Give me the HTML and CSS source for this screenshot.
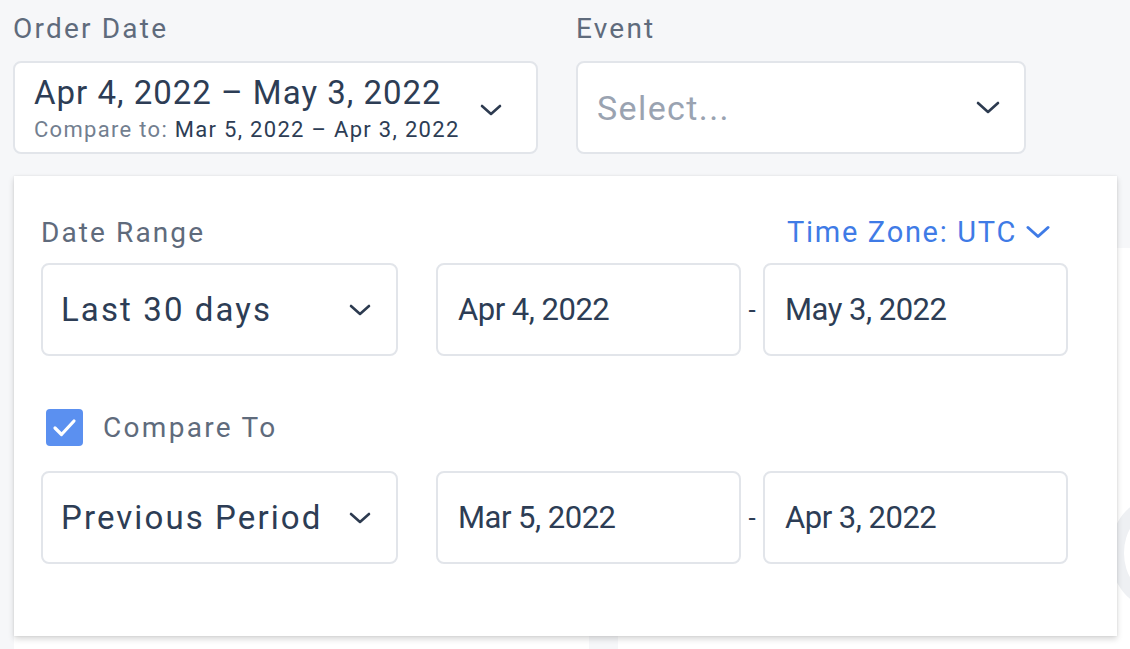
FILE: index.html
```html
<!DOCTYPE html>
<html>
<head>
<meta charset="utf-8">
<link rel="stylesheet" href="styles.css">
</head>
<body>
<div class="page">
  <div class="filters">
    <div class="field field-date">
      <div class="label">Order Date</div>
      <div class="box date-box">
        <div class="date-text">
          <div class="date-main">Apr 4, 2022 – May 3, 2022</div>
          <div class="date-sub"><span class="muted">Compare to:</span> Mar 5, 2022 – Apr 3, 2022</div>
        </div>
        <svg class="chev" width="22" height="12" viewBox="0 0 22 12"><path d="M2 2 L11 10 L20 2" fill="none" stroke="#2d3b50" stroke-width="2.6" stroke-linecap="round" stroke-linejoin="round"/></svg>
      </div>
    </div>
    <div class="field field-event">
      <div class="label">Event</div>
      <div class="box event-box">
        <span class="placeholder">Select...</span>
        <svg class="chev" width="24" height="13" viewBox="0 0 24 13"><path d="M2 2 L12 11 L22 2" fill="none" stroke="#2d3b50" stroke-width="2.6" stroke-linecap="round" stroke-linejoin="round"/></svg>
      </div>
    </div>
  </div>

  <div class="behind">
    <div class="card card-left"></div>
    <div class="card card-right"><div class="donut"></div></div>
  </div>

  <div class="panel">
    <div class="panel-head">
      <div class="section-label">Date Range</div>
      <div class="tz">Time Zone: UTC
        <svg width="24" height="14" viewBox="0 0 24 14"><path d="M2 2.5 L12 11.5 L22 2.5" fill="none" stroke="#3f7be6" stroke-width="3" stroke-linecap="round" stroke-linejoin="round"/></svg>
      </div>
    </div>
    <div class="range-row">
      <div class="box select">
        <span>Last 30 days</span>
        <svg class="chev" width="22" height="12" viewBox="0 0 22 12"><path d="M2 2 L11 10 L20 2" fill="none" stroke="#2d3b50" stroke-width="2.6" stroke-linecap="round" stroke-linejoin="round"/></svg>
      </div>
      <div class="box input">Apr 4, 2022</div>
      <div class="dash">-</div>
      <div class="box input">May 3, 2022</div>
    </div>

    <div class="compare">
      <span class="checkbox">
        <svg width="37" height="37" viewBox="0 0 37 37"><path d="M9 19 L15.5 25.5 L28 12" fill="none" stroke="#fff" stroke-width="3.2" stroke-linecap="round" stroke-linejoin="round"/></svg>
      </span>
      <span class="compare-label">Compare To</span>
    </div>
    <div class="range-row">
      <div class="box select">
        <span>Previous Period</span>
        <svg class="chev" width="22" height="12" viewBox="0 0 22 12"><path d="M2 2 L11 10 L20 2" fill="none" stroke="#2d3b50" stroke-width="2.6" stroke-linecap="round" stroke-linejoin="round"/></svg>
      </div>
      <div class="box input">Mar 5, 2022</div>
      <div class="dash">-</div>
      <div class="box input">Apr 3, 2022</div>
    </div>
  </div>
</div>
</body>
</html>
```

FILE: styles.css
```css
* { box-sizing: border-box; }
html, body { margin: 0; padding: 0; }
body {
  background: #f6f7f9;
  font-family: Roboto, "Liberation Sans", Arial, sans-serif;
  color: #2d3d55;
  width: 1130px;
  height: 649px;
  overflow: hidden;
}
.page {
  position: relative;
  height: 649px;
  padding: 12px 0 0 13px;
}
.filters {
  display: flex;
  gap: 38px;
}
.label {
  font-size: 28px;
  letter-spacing: 2.2px;
  color: #5f6b7c;
  line-height: 34px;
  height: 49px;
}
.box {
  background: #fff;
  border: 2px solid #e2e5ea;
  border-radius: 8px;
}
.date-box {
  width: 525px;
  height: 93px;
  display: flex;
  align-items: center;
  justify-content: space-between;
  padding: 4px 34px 0 19px;
}
.date-main {
  font-size: 33px;
  letter-spacing: 1px;
  line-height: 36px;
}
.date-sub {
  font-size: 22px;
  letter-spacing: 1.3px;
  line-height: 28px;
  margin-top: 5px;
}
.muted { color: #737f90; }
.chev { display: block; flex: none; }
.event-box {
  width: 450px;
  height: 93px;
  display: flex;
  align-items: center;
  justify-content: space-between;
  padding: 0 24px 0 19px;
}
.placeholder {
  font-size: 34px;
  letter-spacing: 1.4px;
  color: #9aa3b1;
}

.behind {
  position: absolute;
  left: 14px;
  top: 248px;
  right: 0;
  bottom: 0;
  display: grid;
  grid-template-columns: 575px 1fr;
  gap: 29px;
}
.card {
  background: #fff;
  border-radius: 8px 0 0 0;
  position: relative;
  overflow: hidden;
}
.donut {
  position: absolute;
  right: -70px;
  top: 250px;
  width: 90px;
  height: 110px;
  border-radius: 50%;
  border: 14px solid #eef0f3;
}

.panel {
  position: absolute;
  left: 14px;
  top: 176px;
  width: 1103px;
  height: 460px;
  background: #fff;
  box-shadow: 0 3px 6px rgba(0,0,0,0.16), 0 0 2px rgba(0,0,0,0.08);
  padding: 39px 49px 0 27px;
}
.panel-head {
  display: flex;
  justify-content: space-between;
  align-items: center;
  height: 34px;
  margin-bottom: 14px;
}
.section-label {
  font-size: 28px;
  letter-spacing: 2.1px;
  color: #5f6b7c;
}
.tz {
  font-size: 29px;
  letter-spacing: 1.7px;
  color: #3f7be6;
  display: flex;
  align-items: center;
  gap: 9px;
  margin-right: 18px;
}
.tz svg { display: block; }
.range-row {
  display: flex;
  align-items: center;
  height: 93px;
}
.select {
  width: 357px;
  height: 93px;
  display: flex;
  align-items: center;
  justify-content: space-between;
  padding: 0 25px 0 18px;
  font-size: 33px;
  letter-spacing: 2.1px;
  margin-right: 38px;
}
.input {
  width: 305px;
  height: 93px;
  display: flex;
  align-items: center;
  padding-left: 20px;
  font-size: 31px;
  letter-spacing: -0.5px;
}
.dash {
  width: 22px;
  text-align: center;
  font-size: 26px;
  color: #2d3d55;
}
.compare {
  display: flex;
  align-items: center;
  margin: 53px 0 25px 5px;
  height: 37px;
}
.checkbox {
  width: 37px;
  height: 37px;
  background: #5b90f0;
  border-radius: 4px;
  display: block;
}
.checkbox svg { display: block; }
.compare-label {
  font-size: 28px;
  letter-spacing: 2.3px;
  color: #5f6b7c;
  margin-left: 20px;
}
```
